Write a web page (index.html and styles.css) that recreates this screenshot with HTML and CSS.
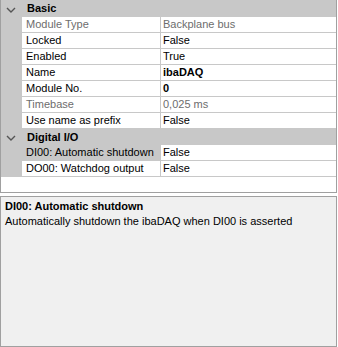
FILE: index.html
```html
<!DOCTYPE html>
<html>
<head>
    <title>Properties</title>
    <link rel="stylesheet" href="styles.css">
</head>
<body>
    <div class="property-grid">
        <div class="category">
            <div class="margin"><svg width="22" height="16" viewBox="0 0 22 16"><path d="M6 8 L10 12 L14 8" fill="none" stroke="#555" stroke-width="1.4"/></svg></div>
            <div class="category-name">Basic</div>
        </div>
        <div class="row">
            <div class="margin"></div>
            <div class="name readonly">Module Type</div>
            <div class="value readonly">Backplane bus</div>
        </div>
        <div class="row">
            <div class="margin"></div>
            <div class="name">Locked</div>
            <div class="value">False</div>
        </div>
        <div class="row">
            <div class="margin"></div>
            <div class="name">Enabled</div>
            <div class="value">True</div>
        </div>
        <div class="row">
            <div class="margin"></div>
            <div class="name">Name</div>
            <div class="value bold">ibaDAQ</div>
        </div>
        <div class="row">
            <div class="margin"></div>
            <div class="name">Module No.</div>
            <div class="value bold">0</div>
        </div>
        <div class="row">
            <div class="margin"></div>
            <div class="name readonly">Timebase</div>
            <div class="value readonly">0,025 ms</div>
        </div>
        <div class="row">
            <div class="margin"></div>
            <div class="name">Use name as prefix</div>
            <div class="value">False</div>
        </div>
        <div class="category">
            <div class="margin"><svg width="22" height="16" viewBox="0 0 22 16"><path d="M6 7 L10 11 L14 7" fill="none" stroke="#555" stroke-width="1.4"/></svg></div>
            <div class="category-name">Digital I/O</div>
        </div>
        <div class="row">
            <div class="margin"></div>
            <div class="name selected">DI00: Automatic shutdown</div>
            <div class="value">False</div>
        </div>
        <div class="row">
            <div class="margin"></div>
            <div class="name">DO00: Watchdog output</div>
            <div class="value">False</div>
        </div>
    </div>

    <div class="description">
        <div class="description-title">DI00: Automatic shutdown</div>
        <div class="description-text">Automatically shutdown the ibaDAQ when DI00 is asserted</div>
    </div>
</body>
</html>
```

FILE: styles.css
```css
body {
    margin: 0;
    padding: 0;
    background-color: #fff;
    font-family: "Liberation Sans", Arial, sans-serif;
    font-size: 11px;
    color: #000;
}
.property-grid {
    width: 337px;
    height: 193px;
    box-sizing: border-box;
    border: 1px solid #a0a0a0;
    border-top: none;
    background-color: #fff;
}
.category {
    display: flex;
    height: 16px;
    background-color: #c8c8c8;
}
.category:first-child {
    height: 17px;
}
.category .margin {
    width: 22px;
}
.category .margin svg {
    display: block;
}
.category-name {
    font-weight: bold;
    line-height: 16px;
    padding-left: 4px;
}
.row {
    display: grid;
    grid-template-columns: 21px 139px 1fr;
    height: 16px;
}
.row .margin {
    background-color: #c8c8c8;
}
.name,
.value {
    box-sizing: border-box;
    height: 16px;
    line-height: 15px;
    padding-left: 4px;
    border-bottom: 1px solid #c8c8c8;
    white-space: nowrap;
    overflow: hidden;
}
.name {
    border-right: 1px solid #c8c8c8;
}
.value {
    padding-left: 2px;
}
.readonly {
    color: #6d6d6d;
}
.bold {
    font-weight: bold;
}
.selected {
    background-color: #c8c8c8;
}
.description {
    width: 337px;
    height: 151px;
    margin-top: 3px;
    box-sizing: border-box;
    border: 1px solid #a0a0a0;
    background-color: #f0f0f0;
    padding: 2px 4px;
    line-height: 15px;
}
.description-title {
    font-weight: bold;
}
```
